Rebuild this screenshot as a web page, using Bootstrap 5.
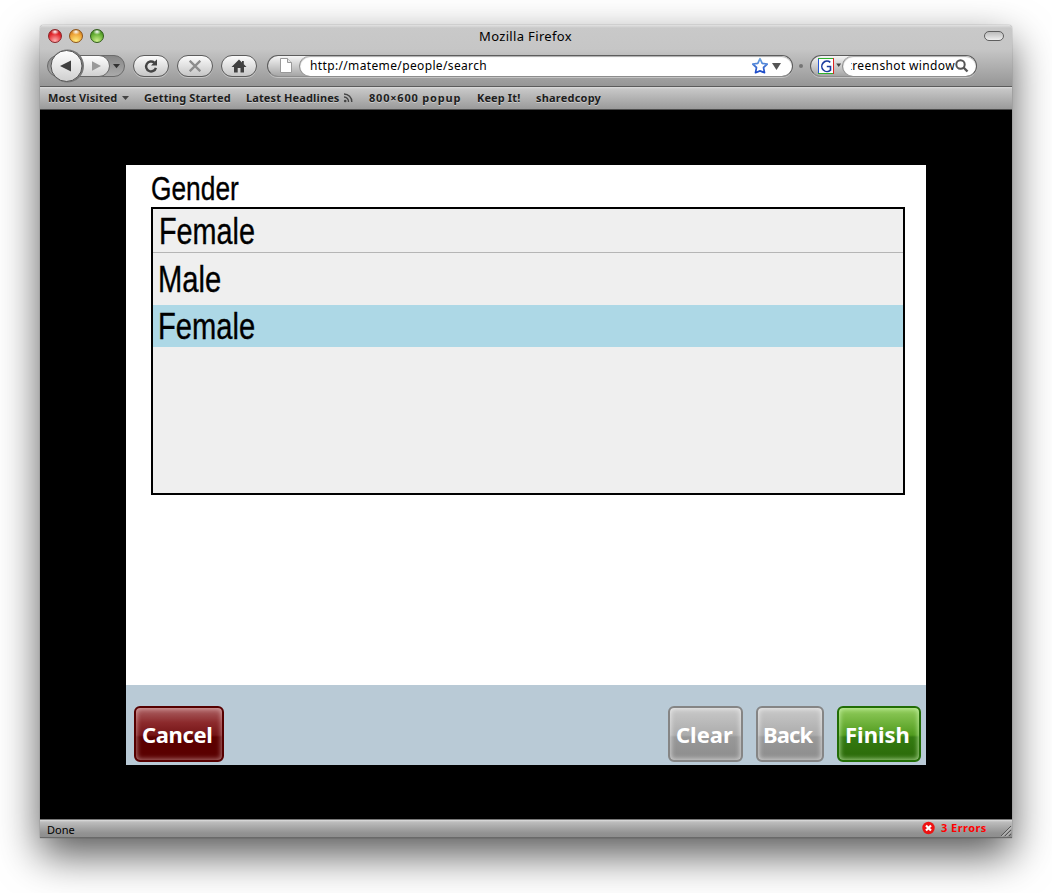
<!DOCTYPE html>
<html lang="en">
<head>
<meta charset="utf-8">
<title>Mozilla Firefox</title>
<link href="https://cdn.jsdelivr.net/npm/bootstrap@5.3.0/dist/css/bootstrap.min.css" rel="stylesheet">
<style>
body{background:#fff;color:#000;font-family:"Noto Sans","Open Sans",sans-serif;overflow:hidden;height:893px}
svg{display:block;flex:none}
.win{width:972px;height:813px;margin:25px 0 0 40px;border-radius:4px 4px 0 0;box-shadow:0 17px 42px rgba(0,0,0,.66),0 0 1px rgba(0,0,0,.7)}
.chrome{height:62px;background:linear-gradient(#e2e2e2 0,#c9c9c9 3px,#c6c6c6 24px,#979797 60px);border-bottom:1px solid #5b5b5b;border-radius:4px 4px 0 0}
.titlebar{height:24px;padding:0 8px 2px 8px}
.light{width:14px;height:14px;border-radius:50%;margin-right:7px}
.light.red{background:radial-gradient(ellipse 4px 3px at 50% 15%,#fff,transparent),radial-gradient(circle at 50% 90%,#ffb0b0,#e2262c 60%,#a5161a 100%);border:1px solid #8a2226}
.light.amber{background:radial-gradient(ellipse 4px 3px at 50% 15%,#fff,transparent),radial-gradient(circle at 50% 90%,#ffec80,#eda034 60%,#a8600f 100%);border:1px solid #8d5318}
.light.green{background:radial-gradient(ellipse 4px 3px at 50% 15%,#fff,transparent),radial-gradient(circle at 50% 90%,#cdf08c,#62ac31 60%,#2b6d14 100%);border:1px solid #2f5c18}
.title{font-size:13px;line-height:22px;top:0;letter-spacing:.34px;padding-right:1px}
.pill-toggle{width:20px;height:10px;border:1px solid #5e5e5e;border-radius:5px;background:linear-gradient(#bbb,#eee)}
.tools{height:37px;padding:6px 0 0 7px}
.tb{width:36px;height:22px;border:1px solid #5c5c5c;border-radius:11px;background:linear-gradient(#fbfbfb,#c6c6c6);box-shadow:0 1px 0 #c4c4c4;margin-right:8px;padding:0}
.field{height:22px;border:1px solid #5c5c5c;border-bottom-color:#8d8d8d;border-radius:11px;background:linear-gradient(#f5f5f5,#a5a5a5);box-shadow:0 1px 0 #c4c4c4;font-size:12px;letter-spacing:.36px;overflow:hidden}
.entry{background:#fff;border-radius:10px;height:20px;box-shadow:inset 0 1px 1px #aaa,-1px 0 0 #8b8b8b}
.dot{width:4px;height:4px;border-radius:50%;background:#747474}
.marks{height:23px;background:linear-gradient(#dedede 0,#c7c7c7 2px,#9a9a9a 22px);border-bottom:1px solid #4c4c4c;font-size:11px;font-weight:700;color:#1d1d1d;padding-left:8px;line-height:22px;text-shadow:0 1px 0 #ccc;letter-spacing:.12px;white-space:nowrap}
.stage{height:709px;background:#000;padding:55px 0 0 86px}
.app{width:800px;height:600px;background:#fff}
.formarea{height:520px;padding:5px 21px 0 25px}
.narrow{font-family:"Liberation Sans",Arial,sans-serif;transform:scaleX(.81);transform-origin:0 0;white-space:nowrap;-webkit-text-stroke:.35px #000}
.question{font-size:32.5px;line-height:39px;height:37px}
.choices{width:754px;height:288px;border:2px solid #000;background:#efefef;font-size:36px}
.picked{height:44px;border-bottom:1px solid #b5b5b5;padding-left:6px;line-height:45px}
.picked .narrow{transform:scaleX(.8)}
.choice{padding-left:5px}
.choice.on{background:#add8e6;height:42px;line-height:44px}
.actions{height:80px;background:#b9cad6;padding:21px 5px 0 8px}
.glossy{height:56px;border:2px solid;border-radius:6px;color:#fff;font-size:22px;font-weight:700;padding:0;line-height:52px;text-align:left;white-space:nowrap}
.g-red{width:90px;padding-left:6px;letter-spacing:-.35px;border-color:#560000;background:linear-gradient(#ad6466 0,#8c2a2c 28%,#741416 52%,#5c0000 56%,#5a0000);box-shadow:inset 0 0 5px 1px rgba(255,225,225,.5)}
.g-gray{border-color:#858585;background:linear-gradient(#c9c9c9,#acacac 52%,#989898 56%,#8d8d8d);box-shadow:inset 0 0 5px 1px rgba(255,255,255,.6)}
.g-green{width:84px;padding-left:6px;border-color:#226d05;background:linear-gradient(#93cd5d,#509b1e 52%,#347b11 56%,#2a6809);box-shadow:inset 0 0 5px 1px rgba(215,255,190,.7)}
.g-clear{width:75px;padding-left:6px;margin-right:13px}
.g-back{width:68px;padding-left:5px;margin-right:13px;letter-spacing:-.85px}
.status{height:19px;background:linear-gradient(#dedede 0,#bdbdbd 2px,#929292 13px,#8e8e8e 17px);border-top:1px solid #777;border-bottom:1px solid #696969;font-size:11px;line-height:20px;padding:0 0 0 7px}
.errs{color:#f00;font-weight:700;font-size:11px;line-height:15px;letter-spacing:.45px;width:59px;margin-left:6px;white-space:nowrap}
</style>
</head>
<body>
<div class="win">
  <header class="chrome">
    <div class="titlebar position-relative d-flex align-items-center">
      <span class="light red"></span><span class="light amber"></span><span class="light green"></span>
      <span class="title position-absolute start-0 end-0 text-center">Mozilla Firefox</span>
      <span class="pill-toggle ms-auto"></span>
    </div>
    <div class="tools d-flex align-items-start">
      <svg width="78" height="34" viewBox="0 0 78 34" style="margin:-6px 8px 0 0">
        <defs>
          <linearGradient id="b" x1="0" y1="0" x2="0" y2="1"><stop offset="0" stop-color="#fff"/><stop offset="1" stop-color="#cfcfcf"/></linearGradient>
          <linearGradient id="d" x1="0" y1="0" x2="0" y2="1"><stop offset="0" stop-color="#868686"/><stop offset="1" stop-color="#ababab"/></linearGradient>
        </defs>
        <rect x=".5" y="6.5" width="77" height="21" rx="10.5" fill="url(#d)" stroke="#6b6b6b"/>
        <path d="M30 6.5H52a10.5 10.5 0 0 1 0 21H30z" fill="url(#b)" stroke="#666"/>
        <circle cx="20.5" cy="17" r="16.5" fill="#777"/>
        <circle cx="19.5" cy="17" r="15.5" fill="url(#b)" stroke="#555"/>
        <path d="M13 17l11-5.5v11z" fill="#3f3f3f"/><path d="M54 17l-9-4.7v9.4z" fill="#999"/>
        <path d="M66 15h7l-3.5 4.3z" fill="#333"/>
      </svg>
      <button class="tb d-flex align-items-center justify-content-center" aria-label="Reload"><svg width="16" height="16" viewBox="0 0 16 16"><path d="M12.9 9.8A5 5 0 1 1 11.3 4.6" fill="none" stroke="#444" stroke-width="2.4"/><path d="M14 1.2v6.3H8z" fill="#444"/></svg></button>
      <button class="tb d-flex align-items-center justify-content-center" aria-label="Stop"><svg width="12" height="12" viewBox="0 0 12 12"><path d="M.7.7l10.600 10.600M11.300.7L.7 11.300" stroke="#8c8c8c" stroke-width="2.3"/></svg></button>
      <button class="tb d-flex align-items-center justify-content-center" aria-label="Home"><svg width="16" height="14" viewBox="0 0 16 14"><path d="M8 .5L.5 8H3v5.5h3.700V9h2.800v4.500H13V8h2.500L12.800 5.300V2H11v1.500z" fill="#404040"/></svg></button>
      <div class="field d-flex" style="width:526px;margin-left:2px">
        <svg width="32" height="20" viewBox="0 0 32 20"><path d="M12.5 2.5h7l4 4v10h-11z" fill="#fff" stroke="#999"/><path d="M19.5 2.5v4h4" fill="#e8e8e8" stroke="#999"/></svg>
        <div class="entry flex-grow-1 d-flex align-items-center">
          <span style="margin-left:10px;line-height:22px">http://mateme/people/search</span>
          <svg class="ms-auto" width="40" height="20" viewBox="0 0 40 20"><defs><linearGradient id="s" x1="0" y1="0" x2="0" y2="1"><stop offset="0" stop-color="#6da6e0"/><stop offset="1" stop-color="#1c49c8"/></linearGradient></defs>
          <path d="M8 2.700l2.200 4.700 5.100.6-3.800 3.500 1 5.200L8 14.900l-4.500 1.800 1-5.200L.7 8l5.100-.6z" fill="#fff" stroke="url(#s)" stroke-width="1.700" stroke-linejoin="round"/><path d="M20 7h9l-4.500 7z" fill="#555"/></svg>
        </div>
      </div>
      <span class="dot" style="margin:9px 9px 0 6px"></span>
      <div class="field d-flex" style="width:167px;margin-left:-2px">
        <svg width="32" height="20" viewBox="0 0 32 20"><rect x="7.500" y="2.500" width="15" height="15" fill="#fff"/><path d="M7.500 17.500v-15" stroke="#2456d6"/><path d="M7 2.500h15.500M7 17.500h15.500" stroke="#2fb02b"/><path d="M22.500 2v16" stroke="#d22"/><path d="M19.300 6.300A5.200 5.200 0 1 0 19.500 14.200V10.500H15.800" fill="none" stroke="#1c3c9e" stroke-width="1.600"/><path d="M25.200 7.500h5L27.700 11z" fill="#444"/></svg>
        <div class="entry flex-grow-1 d-flex align-items-center">
          <div class="overflow-hidden d-flex justify-content-end" style="width:104px;margin-left:8px;line-height:22px;white-space:nowrap"><span>creenshot window</span></div>
          <svg width="14" height="14" viewBox="0 0 14 14"><circle cx="5.500" cy="5.500" r="4.200" fill="none" stroke="#555" stroke-width="2"/><path d="M8.500 8.500l4 4" stroke="#555" stroke-width="2.400"/></svg>
        </div>
      </div>
    </div>
  </header>
  <nav class="marks d-flex">
    <span style="width:74px">Most Visited</span><svg width="22" height="22" viewBox="0 0 22 22"><path d="M0 9h7l-3.500 4z" fill="#444"/></svg>
    <span style="width:102px">Getting Started</span>
    <span style="width:97px">Latest Headlines</span><svg width="26" height="22" viewBox="0 0 26 22"><circle cx="2.200" cy="14" r="1.300" fill="#444"/><path d="M1 10a4.500 4.500 0 0 1 4.500 5M1 7a7.800 7.800 0 0 1 7.800 8" fill="none" stroke="#444" stroke-width="1.400"/></svg>
    <span style="width:108px;letter-spacing:.8px">800×600 popup</span>
    <span style="width:59px">Keep It!</span>
    <span style="letter-spacing:.2px">sharedcopy</span>
  </nav>
  <main class="stage">
    <div class="app">
      <div class="formarea">
        <div class="narrow question">Gender</div>
        <div class="choices">
          <div class="picked"><div class="narrow">Female</div></div>
          <div class="choice" style="height:52px;line-height:53px"><div class="narrow">Male</div></div>
          <div class="choice on"><div class="narrow">Female</div></div>
        </div>
      </div>
      <div class="actions d-flex">
        <button class="glossy g-red">Cancel</button>
        <button class="glossy g-gray g-clear ms-auto">Clear</button>
        <button class="glossy g-gray g-back">Back</button>
        <button class="glossy g-green">Finish</button>
      </div>
    </div>
  </main>
  <footer class="status d-flex">
    <span>Done</span>
    <svg class="ms-auto" width="13" height="16" viewBox="0 0 13 16"><circle cx="6.500" cy="8" r="6.200" fill="#e11"/><path d="M4 5.500l5 5M9 5.500l-5 5" stroke="#fff" stroke-width="2.200"/></svg>
    <span class="errs">3 Errors</span>
    <svg width="12" height="17" viewBox="0 0 12 17"><path d="M1 16L11 6M5 16l6-6M9 16l2-2" stroke="#555"/><path d="M2 16.500l9-9M6 16.500l5-5" stroke="#ddd" stroke-width=".8"/></svg>
  </footer>
</div>
<script src="https://cdn.jsdelivr.net/npm/bootstrap@5.3.0/dist/js/bootstrap.bundle.min.js"></script>
</body>
</html>
